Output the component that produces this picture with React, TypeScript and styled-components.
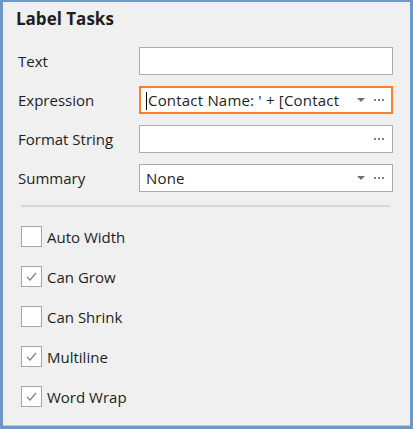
import styled, { createGlobalStyle } from "styled-components";

const GlobalStyle = createGlobalStyle`
  html, body {
    margin: 0;
    padding: 0;
    background: #f0f0f0;
  }
  * {
    box-sizing: border-box;
  }
`;

const Frame = styled.div`
  width: 413px;
  height: 429px;
  background: #f0f0f0;
  border-style: solid;
  border-color: #7096c6;
  border-width: 2px 3px 3px 3px;
  font-family: "Open Sans", "Noto Sans", sans-serif;
  color: #1e1e1e;
  display: flex;
  flex-direction: column;
  padding: 5px 0 0 0;
  box-shadow: inset 0 -1px 0 #c8c8c8;
`;

const Title = styled.h1`
  margin: 0 0 0 13px;
  font-size: 17px;
  font-weight: 700;
  line-height: 24px;
  color: #1e1e1e;
`;

const PropertyGrid = styled.div`
  display: grid;
  grid-template-columns: 121px 254px;
  grid-auto-rows: 28px;
  row-gap: 11px;
  margin: 16px 0 0 15px;
`;

const Label = styled.label`
  display: flex;
  align-items: center;
  font-size: 15px;
`;

const Field = styled.div<{ $focused?: boolean }>`
  display: flex;
  align-items: center;
  background: #ffffff;
  border: ${(p) => (p.$focused ? "2px solid #ff7f27" : "1px solid #ababab")};
  padding: ${(p) => (p.$focused ? "0 4px 0 5px" : "0 5px 0 6px")};
  overflow: hidden;
`;

const FieldText = styled.span`
  flex: 1;
  min-width: 0;
  font-size: 15px;
  letter-spacing: 0.2px;
  white-space: nowrap;
  overflow: hidden;
`;

const Caret = styled.span`
  display: inline-block;
  width: 1px;
  height: 18px;
  background: #000;
  vertical-align: middle;
  margin-right: 1px;
`;

const ArrowButton = styled.span`
  width: 24px;
  padding-left: 4px;
  display: flex;
  justify-content: center;
  align-items: center;
  &::before {
    content: "";
    border-left: 4px solid transparent;
    border-right: 4px solid transparent;
    border-top: 4px solid #6f6f6f;
  }
`;

const DotsButton = styled.span`
  width: 16px;
  display: flex;
  justify-content: center;
  align-items: center;
  gap: 2px;
  & > i {
    width: 2px;
    height: 2px;
    background: #808080;
  }
`;

const Divider = styled.hr`
  margin: 13px 20px 0 18px;
  border: none;
  border-top: 2px solid #d7d7d7;
  height: 0;
`;

const CheckList = styled.div`
  display: flex;
  flex-direction: column;
  gap: 19px;
  margin: 19px 0 0 18px;
`;

const CheckRow = styled.label`
  display: flex;
  align-items: center;
  gap: 5px;
  font-size: 15px;
`;

const Box = styled.span`
  width: 21px;
  height: 21px;
  background: #ffffff;
  border: 1px solid #a6a6a6;
  display: flex;
  align-items: center;
  justify-content: center;
`;

const Dots = () => (
  <DotsButton>
    <i />
    <i />
    <i />
  </DotsButton>
);

const Check = ({ checked, label }: { checked: boolean; label: string }) => (
  <CheckRow>
    <Box>
      {checked && (
        <svg width="13" height="13" viewBox="0 0 13 13">
          <path d="M2 7 L5 10 L11 3" fill="none" stroke="#808080" strokeWidth="1.2" />
        </svg>
      )}
    </Box>
    {label}
  </CheckRow>
);

const App = () => (
  <>
    <GlobalStyle />
    <Frame>
      <Title>Label Tasks</Title>
      <PropertyGrid>
        <Label>Text</Label>
        <Field />
        <Label>Expression</Label>
        <Field $focused>
          <FieldText>
            <Caret />
            Contact Name: ' + [Contact
          </FieldText>
          <ArrowButton />
          <Dots />
        </Field>
        <Label>Format String</Label>
        <Field>
          <FieldText />
          <Dots />
        </Field>
        <Label>Summary</Label>
        <Field>
          <FieldText>None</FieldText>
          <ArrowButton />
          <Dots />
        </Field>
      </PropertyGrid>
      <Divider />
      <CheckList>
        <Check checked={false} label="Auto Width" />
        <Check checked label="Can Grow" />
        <Check checked={false} label="Can Shrink" />
        <Check checked label="Multiline" />
        <Check checked label="Word Wrap" />
      </CheckList>
    </Frame>
  </>
);

export default App;
